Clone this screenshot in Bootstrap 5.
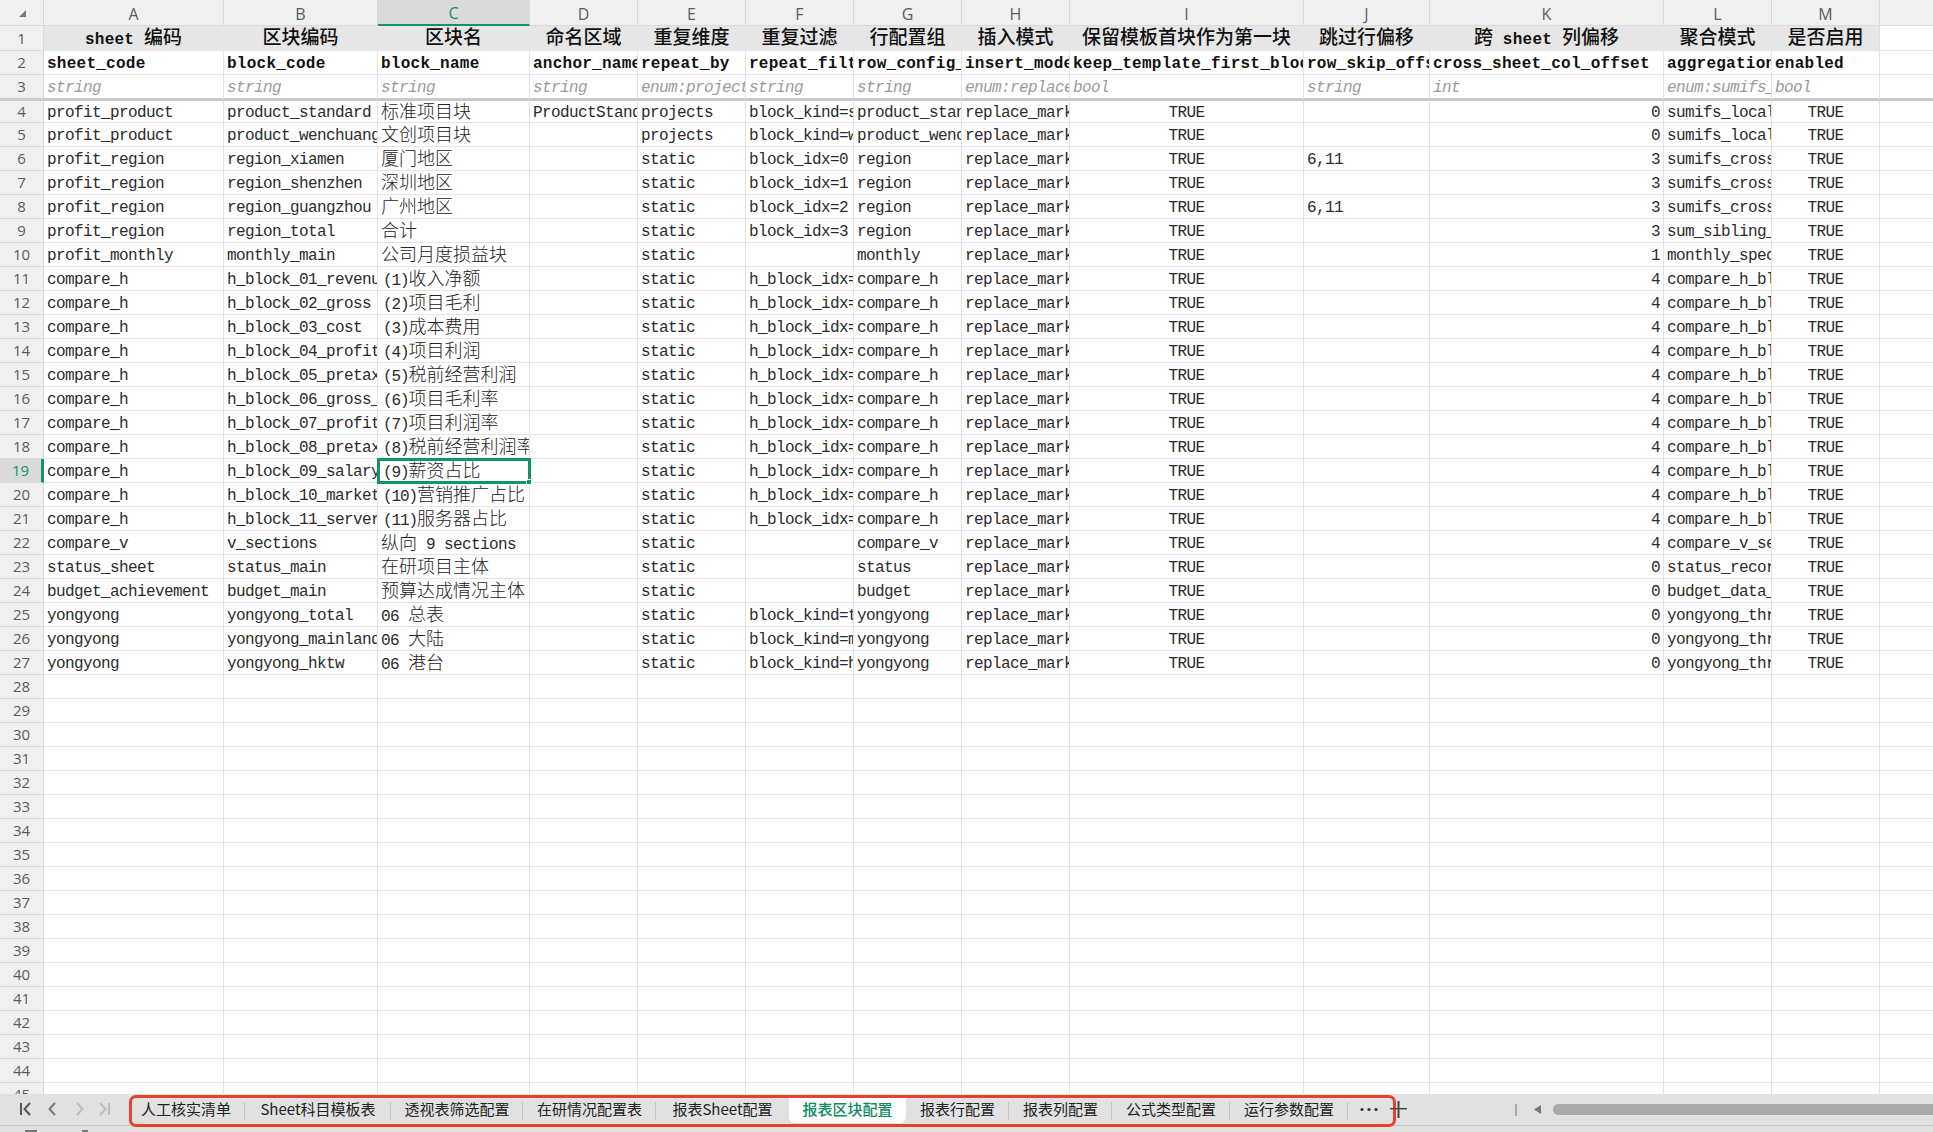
<!doctype html>
<html lang="zh"><head><meta charset="utf-8"><title>报表区块配置</title>
<link rel="stylesheet" href="https://cdn.jsdelivr.net/npm/bootstrap@5.3.0/dist/css/bootstrap.min.css">
<style>
html,body{height:100%;overflow:hidden}
body{background:#fff;font-family:"Liberation Mono","Noto Sans CJK SC",monospace;color:#222}
.sheet-wrap{height:1094px;overflow:hidden}
.sheet-grid.table{table-layout:fixed;width:2000px;border-collapse:separate;border-spacing:0;margin:0;font-size:16px;letter-spacing:-.6px;line-height:1}
.sheet-grid.table>:not(caption)>*>*{padding:2px 3px 0;border:0;border-right:1px solid #e3e3e3;border-bottom:1px solid #e3e3e3;box-shadow:none;background:#fff;color:#2b2b2b;white-space:nowrap;overflow:hidden;vertical-align:middle;font-weight:400}
.sheet-grid.table>:not(caption)>*>.zh,.sheet-grid .zh{font-size:18px;letter-spacing:0;font-weight:300;color:#222}
.sheet-grid .par{letter-spacing:-1.1px;margin-left:2px}
.sheet-grid .rh-25{height:25px}.sheet-grid .rh-24{height:24px}.sheet-grid .rh-22{height:22px}.sheet-grid .rh-26{height:26px}
.sheet-grid.table>:not(caption)>*>.hd{background:#f0f0f0;border-color:#d9d9d9;color:#5c5c5c;text-align:center;font-family:"Open Sans","Noto Sans",sans-serif;font-size:15px;letter-spacing:0;padding:0}
.sheet-grid.table>:not(caption)>*>.hd.ltr{font-size:16px;padding-top:2px}
.sheet-grid.table>:not(caption)>*>.hd.sel{background:#dadada;color:#0f9568}
.sheet-grid.table>:not(caption)>*>.hd.sel-col{border-bottom:2px solid #0f9568}
.sheet-grid.table>:not(caption)>*>.hd.sel-row{border-right:3px solid #0f9568}
.sheet-grid.table>:not(caption)>*>.t1{background:#e6e6e6;font-weight:700;text-align:center;border-color:#e6e6e6;color:#111;letter-spacing:.25px}
.sheet-grid.table>:not(caption)>*>.t1 .zh,.sheet-grid.table>:not(caption)>*>.t1.zh{font-weight:500;font-size:19px;letter-spacing:0;color:#111}
.sheet-grid.table>:not(caption)>*>.t1.end{border-right-color:#dcdcdc}
.sheet-grid.table>:not(caption)>*>.t2{font-weight:700;color:#111;letter-spacing:.25px}
.sheet-grid.table>:not(caption)>*>.t3{font-style:italic;color:#9a9a9a}
.sheet-grid.table>:not(caption)>tr.frz>*{border-bottom:3px solid #c9c9c9}
.sheet-grid.table>:not(caption)>*>.num{text-align:right;padding-right:3px}
.sheet-grid.table>:not(caption)>*>.ctr{text-align:center}
.sheet-grid.table>:not(caption)>*>.cur{position:relative;outline:3px solid #0f9568;outline-offset:-2px;overflow:visible}
.fill-h{position:absolute;right:-3px;bottom:-3px;width:6px;height:6px;background:#0f9568;border:1px solid #fff}
.tabbar{height:32px;background:#e1e1e1;border-bottom:1px solid #c6c6c6;font-family:"Noto Sans CJK SC","Noto Sans",sans-serif;font-size:15px;color:#222}
.statusbar{height:6px;background:#e1e1e1;overflow:hidden}
.statusbar svg{display:block}
.sheet-nav{width:129px;height:31px;padding-left:20px}
.sheet-nav svg{display:block;margin-top:-1px}
.tab-box{height:32px;width:1267px;margin-top:1px;border:3px solid #e8412a;border-radius:7px;position:relative;z-index:2}
.sheet-tab{height:25px;line-height:22px;position:relative;white-space:nowrap;text-align:center;flex:none}
.sheet-tab:nth-child(1){width:113px;padding-right:5px}
.sheet-tab:nth-child(2){width:146px}
.sheet-tab:nth-child(3){width:132px}
.sheet-tab:nth-child(4){width:133px}
.sheet-tab:nth-child(5){width:133px}
.sheet-tab:nth-child(6){width:117px}
.sheet-tab:nth-child(7){width:103px}
.sheet-tab:nth-child(8){width:103px}
.sheet-tab:nth-child(9){width:118px}
.sheet-tab:nth-child(10){width:118px}
.sheet-tab.sep::after{content:"";position:absolute;right:0;top:4px;height:18px;width:1px;background:#c4c4c4}
.sheet-tab.on{background:#fff;color:#0f8a62;font-weight:500;border-radius:0 0 6px 6px}
.more-dots{margin-left:12px;margin-top:9px;display:block}
.plus-g{margin-left:-6px;position:relative;z-index:3;display:block}
.scroll-wrap{margin-left:108px;height:31px;min-width:0}
.vbar{width:2px;height:12px;background:#aaa;margin-right:17px}
.scroll-thumb{height:11px;background:#aaa;border-radius:5px 0 0 5px;margin-left:12px}
</style></head><body>
<div class="sheet-wrap">
<table class="table sheet-grid">
<colgroup><col style="width:44px"><col style="width:180px"><col style="width:154px"><col style="width:152px"><col style="width:108px"><col style="width:108px"><col style="width:108px"><col style="width:108px"><col style="width:108px"><col style="width:234px"><col style="width:126px"><col style="width:234px"><col style="width:108px"><col style="width:108px"><col style="width:120px"></colgroup>
<tbody>
<tr class="rh-25"><th class="hd"><svg width="44" height="25" viewBox="0 0 44 25"><polygon points="26,10 26,17 19,17" fill="#7a7a7a"/></svg></th><th class="hd ltr">A</th><th class="hd ltr">B</th><th class="hd ltr sel sel-col">C</th><th class="hd ltr">D</th><th class="hd ltr">E</th><th class="hd ltr">F</th><th class="hd ltr">G</th><th class="hd ltr">H</th><th class="hd ltr">I</th><th class="hd ltr">J</th><th class="hd ltr">K</th><th class="hd ltr">L</th><th class="hd ltr">M</th><th class="hd ltr">N</th></tr>
<tr class="rh-25"><th class="hd">1</th><td class="t1">sheet <span class="zh">编码</span></td><td class="t1 zh">区块编码</td><td class="t1 zh">区块名</td><td class="t1 zh">命名区域</td><td class="t1 zh">重复维度</td><td class="t1 zh">重复过滤</td><td class="t1 zh">行配置组</td><td class="t1 zh">插入模式</td><td class="t1 zh">保留模板首块作为第一块</td><td class="t1 zh">跳过行偏移</td><td class="t1"><span class="zh">跨</span> sheet <span class="zh">列偏移</span></td><td class="t1 zh">聚合模式</td><td class="t1 zh end">是否启用</td><td></td></tr>
<tr class="rh-24"><th class="hd">2</th><td class="t2">sheet_code</td><td class="t2">block_code</td><td class="t2">block_name</td><td class="t2">anchor_name</td><td class="t2">repeat_by</td><td class="t2">repeat_filter</td><td class="t2">row_config_group</td><td class="t2">insert_mode</td><td class="t2">keep_template_first_block</td><td class="t2">row_skip_offset</td><td class="t2">cross_sheet_col_offset</td><td class="t2">aggregation_mode</td><td class="t2">enabled</td><td></td></tr>
<tr class="rh-26 frz"><th class="hd">3</th><td class="t3">string</td><td class="t3">string</td><td class="t3">string</td><td class="t3">string</td><td class="t3">enum:projects</td><td class="t3">string</td><td class="t3">string</td><td class="t3">enum:replace_marker</td><td class="t3">bool</td><td class="t3">string</td><td class="t3">int</td><td class="t3">enum:sumifs_local</td><td class="t3">bool</td><td></td></tr>
<tr class="rh-22"><th class="hd">4</th><td>profit_product</td><td>product_standard</td><td class="zh">标准项目块</td><td>ProductStandard</td><td>projects</td><td>block_kind=standard</td><td>product_standard</td><td>replace_marker</td><td class="ctr">TRUE</td><td></td><td class="num">0</td><td>sumifs_local</td><td class="ctr">TRUE</td><td></td></tr>
<tr class="rh-24"><th class="hd">5</th><td>profit_product</td><td>product_wenchuang</td><td class="zh">文创项目块</td><td></td><td>projects</td><td>block_kind=wenchuang</td><td>product_wenchuang</td><td>replace_marker</td><td class="ctr">TRUE</td><td></td><td class="num">0</td><td>sumifs_local</td><td class="ctr">TRUE</td><td></td></tr>
<tr class="rh-24"><th class="hd">6</th><td>profit_region</td><td>region_xiamen</td><td class="zh">厦门地区</td><td></td><td>static</td><td>block_idx=0</td><td>region</td><td>replace_marker</td><td class="ctr">TRUE</td><td>6,11</td><td class="num">3</td><td>sumifs_cross</td><td class="ctr">TRUE</td><td></td></tr>
<tr class="rh-24"><th class="hd">7</th><td>profit_region</td><td>region_shenzhen</td><td class="zh">深圳地区</td><td></td><td>static</td><td>block_idx=1</td><td>region</td><td>replace_marker</td><td class="ctr">TRUE</td><td></td><td class="num">3</td><td>sumifs_cross</td><td class="ctr">TRUE</td><td></td></tr>
<tr class="rh-24"><th class="hd">8</th><td>profit_region</td><td>region_guangzhou</td><td class="zh">广州地区</td><td></td><td>static</td><td>block_idx=2</td><td>region</td><td>replace_marker</td><td class="ctr">TRUE</td><td>6,11</td><td class="num">3</td><td>sumifs_cross</td><td class="ctr">TRUE</td><td></td></tr>
<tr class="rh-24"><th class="hd">9</th><td>profit_region</td><td>region_total</td><td class="zh">合计</td><td></td><td>static</td><td>block_idx=3</td><td>region</td><td>replace_marker</td><td class="ctr">TRUE</td><td></td><td class="num">3</td><td>sum_sibling_</td><td class="ctr">TRUE</td><td></td></tr>
<tr class="rh-24"><th class="hd">10</th><td>profit_monthly</td><td>monthly_main</td><td class="zh">公司月度损益块</td><td></td><td>static</td><td></td><td>monthly</td><td>replace_marker</td><td class="ctr">TRUE</td><td></td><td class="num">1</td><td>monthly_spec</td><td class="ctr">TRUE</td><td></td></tr>
<tr class="rh-24"><th class="hd">11</th><td>compare_h</td><td>h_block_01_revenue</td><td><span class="par">(1)</span><span class="zh">收入净额</span></td><td></td><td>static</td><td>h_block_idx=0</td><td>compare_h</td><td>replace_marker</td><td class="ctr">TRUE</td><td></td><td class="num">4</td><td>compare_h_bl</td><td class="ctr">TRUE</td><td></td></tr>
<tr class="rh-24"><th class="hd">12</th><td>compare_h</td><td>h_block_02_gross</td><td><span class="par">(2)</span><span class="zh">项目毛利</span></td><td></td><td>static</td><td>h_block_idx=1</td><td>compare_h</td><td>replace_marker</td><td class="ctr">TRUE</td><td></td><td class="num">4</td><td>compare_h_bl</td><td class="ctr">TRUE</td><td></td></tr>
<tr class="rh-24"><th class="hd">13</th><td>compare_h</td><td>h_block_03_cost</td><td><span class="par">(3)</span><span class="zh">成本费用</span></td><td></td><td>static</td><td>h_block_idx=2</td><td>compare_h</td><td>replace_marker</td><td class="ctr">TRUE</td><td></td><td class="num">4</td><td>compare_h_bl</td><td class="ctr">TRUE</td><td></td></tr>
<tr class="rh-24"><th class="hd">14</th><td>compare_h</td><td>h_block_04_profit</td><td><span class="par">(4)</span><span class="zh">项目利润</span></td><td></td><td>static</td><td>h_block_idx=3</td><td>compare_h</td><td>replace_marker</td><td class="ctr">TRUE</td><td></td><td class="num">4</td><td>compare_h_bl</td><td class="ctr">TRUE</td><td></td></tr>
<tr class="rh-24"><th class="hd">15</th><td>compare_h</td><td>h_block_05_pretax</td><td><span class="par">(5)</span><span class="zh">税前经营利润</span></td><td></td><td>static</td><td>h_block_idx=4</td><td>compare_h</td><td>replace_marker</td><td class="ctr">TRUE</td><td></td><td class="num">4</td><td>compare_h_bl</td><td class="ctr">TRUE</td><td></td></tr>
<tr class="rh-24"><th class="hd">16</th><td>compare_h</td><td>h_block_06_gross_</td><td><span class="par">(6)</span><span class="zh">项目毛利率</span></td><td></td><td>static</td><td>h_block_idx=5</td><td>compare_h</td><td>replace_marker</td><td class="ctr">TRUE</td><td></td><td class="num">4</td><td>compare_h_bl</td><td class="ctr">TRUE</td><td></td></tr>
<tr class="rh-24"><th class="hd">17</th><td>compare_h</td><td>h_block_07_profit</td><td><span class="par">(7)</span><span class="zh">项目利润率</span></td><td></td><td>static</td><td>h_block_idx=6</td><td>compare_h</td><td>replace_marker</td><td class="ctr">TRUE</td><td></td><td class="num">4</td><td>compare_h_bl</td><td class="ctr">TRUE</td><td></td></tr>
<tr class="rh-24"><th class="hd">18</th><td>compare_h</td><td>h_block_08_pretax</td><td><span class="par">(8)</span><span class="zh">税前经营利润率</span></td><td></td><td>static</td><td>h_block_idx=7</td><td>compare_h</td><td>replace_marker</td><td class="ctr">TRUE</td><td></td><td class="num">4</td><td>compare_h_bl</td><td class="ctr">TRUE</td><td></td></tr>
<tr class="rh-24"><th class="hd sel sel-row">19</th><td>compare_h</td><td>h_block_09_salary</td><td class="cur"><span class="par">(9)</span><span class="zh">薪资占比</span><span class="fill-h"></span></td><td></td><td>static</td><td>h_block_idx=8</td><td>compare_h</td><td>replace_marker</td><td class="ctr">TRUE</td><td></td><td class="num">4</td><td>compare_h_bl</td><td class="ctr">TRUE</td><td></td></tr>
<tr class="rh-24"><th class="hd">20</th><td>compare_h</td><td>h_block_10_market</td><td><span class="par">(10)</span><span class="zh">营销推广占比</span></td><td></td><td>static</td><td>h_block_idx=9</td><td>compare_h</td><td>replace_marker</td><td class="ctr">TRUE</td><td></td><td class="num">4</td><td>compare_h_bl</td><td class="ctr">TRUE</td><td></td></tr>
<tr class="rh-24"><th class="hd">21</th><td>compare_h</td><td>h_block_11_server</td><td><span class="par">(11)</span><span class="zh">服务器占比</span></td><td></td><td>static</td><td>h_block_idx=10</td><td>compare_h</td><td>replace_marker</td><td class="ctr">TRUE</td><td></td><td class="num">4</td><td>compare_h_bl</td><td class="ctr">TRUE</td><td></td></tr>
<tr class="rh-24"><th class="hd">22</th><td>compare_v</td><td>v_sections</td><td><span class="zh">纵向</span> 9 sections</td><td></td><td>static</td><td></td><td>compare_v</td><td>replace_marker</td><td class="ctr">TRUE</td><td></td><td class="num">4</td><td>compare_v_se</td><td class="ctr">TRUE</td><td></td></tr>
<tr class="rh-24"><th class="hd">23</th><td>status_sheet</td><td>status_main</td><td class="zh">在研项目主体</td><td></td><td>static</td><td></td><td>status</td><td>replace_marker</td><td class="ctr">TRUE</td><td></td><td class="num">0</td><td>status_recor</td><td class="ctr">TRUE</td><td></td></tr>
<tr class="rh-24"><th class="hd">24</th><td>budget_achievement</td><td>budget_main</td><td class="zh">预算达成情况主体</td><td></td><td>static</td><td></td><td>budget</td><td>replace_marker</td><td class="ctr">TRUE</td><td></td><td class="num">0</td><td>budget_data_</td><td class="ctr">TRUE</td><td></td></tr>
<tr class="rh-24"><th class="hd">25</th><td>yongyong</td><td>yongyong_total</td><td>06 <span class="zh">总表</span></td><td></td><td>static</td><td>block_kind=total</td><td>yongyong</td><td>replace_marker</td><td class="ctr">TRUE</td><td></td><td class="num">0</td><td>yongyong_thr</td><td class="ctr">TRUE</td><td></td></tr>
<tr class="rh-24"><th class="hd">26</th><td>yongyong</td><td>yongyong_mainland</td><td>06 <span class="zh">大陆</span></td><td></td><td>static</td><td>block_kind=mainland</td><td>yongyong</td><td>replace_marker</td><td class="ctr">TRUE</td><td></td><td class="num">0</td><td>yongyong_thr</td><td class="ctr">TRUE</td><td></td></tr>
<tr class="rh-24"><th class="hd">27</th><td>yongyong</td><td>yongyong_hktw</td><td>06 <span class="zh">港台</span></td><td></td><td>static</td><td>block_kind=hktw</td><td>yongyong</td><td>replace_marker</td><td class="ctr">TRUE</td><td></td><td class="num">0</td><td>yongyong_thr</td><td class="ctr">TRUE</td><td></td></tr>
<tr class="rh-24"><th class="hd">28</th><td></td><td></td><td></td><td></td><td></td><td></td><td></td><td></td><td></td><td></td><td></td><td></td><td></td><td></td></tr>
<tr class="rh-24"><th class="hd">29</th><td></td><td></td><td></td><td></td><td></td><td></td><td></td><td></td><td></td><td></td><td></td><td></td><td></td><td></td></tr>
<tr class="rh-24"><th class="hd">30</th><td></td><td></td><td></td><td></td><td></td><td></td><td></td><td></td><td></td><td></td><td></td><td></td><td></td><td></td></tr>
<tr class="rh-24"><th class="hd">31</th><td></td><td></td><td></td><td></td><td></td><td></td><td></td><td></td><td></td><td></td><td></td><td></td><td></td><td></td></tr>
<tr class="rh-24"><th class="hd">32</th><td></td><td></td><td></td><td></td><td></td><td></td><td></td><td></td><td></td><td></td><td></td><td></td><td></td><td></td></tr>
<tr class="rh-24"><th class="hd">33</th><td></td><td></td><td></td><td></td><td></td><td></td><td></td><td></td><td></td><td></td><td></td><td></td><td></td><td></td></tr>
<tr class="rh-24"><th class="hd">34</th><td></td><td></td><td></td><td></td><td></td><td></td><td></td><td></td><td></td><td></td><td></td><td></td><td></td><td></td></tr>
<tr class="rh-24"><th class="hd">35</th><td></td><td></td><td></td><td></td><td></td><td></td><td></td><td></td><td></td><td></td><td></td><td></td><td></td><td></td></tr>
<tr class="rh-24"><th class="hd">36</th><td></td><td></td><td></td><td></td><td></td><td></td><td></td><td></td><td></td><td></td><td></td><td></td><td></td><td></td></tr>
<tr class="rh-24"><th class="hd">37</th><td></td><td></td><td></td><td></td><td></td><td></td><td></td><td></td><td></td><td></td><td></td><td></td><td></td><td></td></tr>
<tr class="rh-24"><th class="hd">38</th><td></td><td></td><td></td><td></td><td></td><td></td><td></td><td></td><td></td><td></td><td></td><td></td><td></td><td></td></tr>
<tr class="rh-24"><th class="hd">39</th><td></td><td></td><td></td><td></td><td></td><td></td><td></td><td></td><td></td><td></td><td></td><td></td><td></td><td></td></tr>
<tr class="rh-24"><th class="hd">40</th><td></td><td></td><td></td><td></td><td></td><td></td><td></td><td></td><td></td><td></td><td></td><td></td><td></td><td></td></tr>
<tr class="rh-24"><th class="hd">41</th><td></td><td></td><td></td><td></td><td></td><td></td><td></td><td></td><td></td><td></td><td></td><td></td><td></td><td></td></tr>
<tr class="rh-24"><th class="hd">42</th><td></td><td></td><td></td><td></td><td></td><td></td><td></td><td></td><td></td><td></td><td></td><td></td><td></td><td></td></tr>
<tr class="rh-24"><th class="hd">43</th><td></td><td></td><td></td><td></td><td></td><td></td><td></td><td></td><td></td><td></td><td></td><td></td><td></td><td></td></tr>
<tr class="rh-24"><th class="hd">44</th><td></td><td></td><td></td><td></td><td></td><td></td><td></td><td></td><td></td><td></td><td></td><td></td><td></td><td></td></tr>
<tr class="rh-24"><th class="hd">45</th><td></td><td></td><td></td><td></td><td></td><td></td><td></td><td></td><td></td><td></td><td></td><td></td><td></td><td></td></tr>
</tbody></table>
</div>
<div class="tabbar d-flex align-items-start">
<div class="sheet-nav d-flex align-items-center flex-shrink-0">
<svg width="92" height="14" viewBox="0 0 92 14" fill="none" stroke-width="2"><path d="M1 1v12M10 1 4.500 7l5.500 6" stroke="#555"/><path d="M35 1 29.500 7l5.500 6" stroke="#777"/><path d="M57 1l5.500 6-5.500 6" stroke="#bdbdbd"/><path d="M80 1l5.500 6-5.500 6M89 1v12" stroke="#bdbdbd"/></svg>
</div>
<div class="tab-box d-flex align-items-start flex-shrink-0">
<div class="sheet-tab sep">人工核实清单</div>
<div class="sheet-tab sep">Sheet科目模板表</div>
<div class="sheet-tab sep">透视表筛选配置</div>
<div class="sheet-tab sep">在研情况配置表</div>
<div class="sheet-tab">报表Sheet配置</div>
<div class="sheet-tab on">报表区块配置</div>
<div class="sheet-tab sep">报表行配置</div>
<div class="sheet-tab sep">报表列配置</div>
<div class="sheet-tab sep">公式类型配置</div>
<div class="sheet-tab sep">运行参数配置</div>
<svg class="more-dots flex-shrink-0" width="18" height="5" viewBox="0 0 18 5" fill="#333"><circle cx="2" cy="2.500" r="1.600"/><circle cx="9" cy="2.500" r="1.600"/><circle cx="16" cy="2.500" r="1.600"/></svg>
</div>
<svg class="plus-g flex-shrink-0" width="17" height="31" viewBox="0 0 17 31"><path d="M8.500 7v17" stroke="#444" stroke-width="2"/><path d="M0 14.700h17" stroke="#444" stroke-width="1.500"/></svg>
<div class="scroll-wrap d-flex align-items-center flex-grow-1">
<div class="vbar flex-shrink-0"></div>
<svg class="flex-shrink-0" width="7" height="9" viewBox="0 0 7 9"><polygon points="7,0 7,9 0,4.500" fill="#777"/></svg>
<div class="scroll-thumb flex-grow-1"></div>
</div>
</div>
<div class="statusbar"><svg width="100" height="6" viewBox="0 0 100 6"><rect x="25" y="4" width="12" height="2" fill="#777"/><rect x="82" y="4" width="6" height="2" fill="#777"/></svg></div>
<script src="https://cdn.jsdelivr.net/npm/bootstrap@5.3.0/dist/js/bootstrap.bundle.min.js"></script>
</body></html>
